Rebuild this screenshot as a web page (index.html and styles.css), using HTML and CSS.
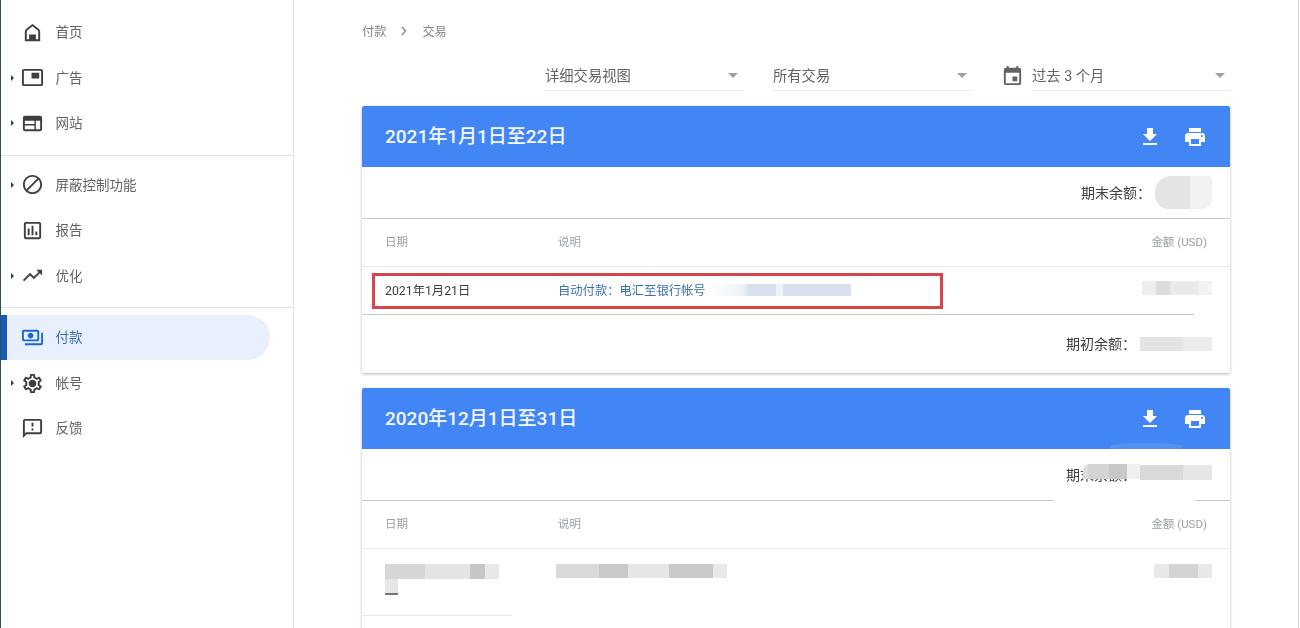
FILE: index.html
```html
<!DOCTYPE html>
<html lang="zh-CN">
<head>
<meta charset="utf-8">
<title>交易</title>
<link rel="stylesheet" href="styles.css">
</head>
<body>
<div class="page">
  <nav class="sidebar">
    <div class="nav-group first">
      <a class="nav-item"><span class="caret none"></span><svg class="nav-icon" viewBox="0 0 24 24"><path fill-rule="evenodd" d="M12 3L5.500 8Q4 9.200 4 11V21H20V11Q20 9.200 18.500 8ZM12 5.500L17.200 9.600Q18 10.200 18 11V19H15.500V14H8.500V19H6V11Q6 10.200 6.800 9.600Z"/></svg><span class="label">首页</span></a>
      <a class="nav-item"><span class="caret"></span><svg class="nav-icon" viewBox="0 0 24 24"><path d="M19 7h-8v6h8V7zm2-4H3c-1.100 0-2 .9-2 2v14c0 1.100.9 1.980 2 1.980h18c1.100 0 2-.88 2-1.980V5c0-1.100-.9-2-2-2zm0 16.010H3V4.980h18v14.030z"/></svg><span class="label">广告</span></a>
      <a class="nav-item"><span class="caret"></span><svg class="nav-icon" viewBox="0 0 24 24"><path d="M20 4H4c-1.100 0-2 .9-2 2v12c0 1.100.9 2 2 2h16c1.100 0 2-.9 2-2V6c0-1.100-.9-2-2-2zm-6 14H4v-4h10v4zm0-5.500H4V9h10v3.500zm6 5.500h-4.500V9H20v9z"/></svg><span class="label">网站</span></a>
    </div>
    <div class="nav-group second">
      <a class="nav-item"><span class="caret"></span><svg class="nav-icon" viewBox="0 0 24 24"><path d="M12 2C6.480 2 2 6.480 2 12s4.480 10 10 10 10-4.480 10-10S17.520 2 12 2zM4 12c0-4.420 3.580-8 8-8 1.850 0 3.550.63 4.900 1.690L5.690 16.900C4.630 15.550 4 13.850 4 12zm8 8c-1.850 0-3.550-.63-4.900-1.690L18.310 7.100C19.370 8.450 20 10.150 20 12c0 4.420-3.580 8-8 8z"/></svg><span class="label">屏蔽控制功能</span></a>
      <a class="nav-item"><span class="caret none"></span><svg class="nav-icon" viewBox="0 0 24 24"><path d="M19 3H5c-1.100 0-2 .9-2 2v14c0 1.100.9 2 2 2h14c1.100 0 2-.9 2-2V5c0-1.100-.9-2-2-2zm0 16H5V5h14v14zM7 10h2v7H7zm4-3h2v10h-2zm4 6h2v4h-2z"/></svg><span class="label">报告</span></a>
      <a class="nav-item"><span class="caret"></span><svg class="nav-icon" viewBox="0 0 24 24"><path d="M16 6l2.290 2.290-4.880 4.880-4-4L2 16.590 3.410 18l6-6 4 4 6.300-6.290L22 12V6z"/></svg><span class="label">优化</span></a>
    </div>
    <div class="nav-group last">
      <a class="nav-item active"><span class="caret none"></span><svg class="nav-icon" viewBox="0 0 24 24"><path d="M19 14V6c0-1.100-.9-2-2-2H3c-1.100 0-2 .9-2 2v8c0 1.100.9 2 2 2h14c1.100 0 2-.9 2-2zm-2 0H3V6h14v8zm-7-7c-1.660 0-3 1.340-3 3s1.340 3 3 3 3-1.340 3-3-1.340-3-3-3zm13 0v11c0 1.100-.9 2-2 2H4v-2h17V7h2z"/></svg><span class="label">付款</span></a>
      <a class="nav-item"><span class="caret"></span><svg class="nav-icon" viewBox="0 0 24 24"><path d="M19.430 12.980c.04-.32.07-.64.07-.98 0-.34-.03-.66-.07-.98l2.110-1.650c.19-.15.24-.42.12-.64l-2-3.460c-.09-.16-.26-.25-.44-.25-.06 0-.12.01-.17.03l-2.490 1c-.52-.4-1.080-.73-1.690-.98l-.38-2.650C14.460 2.180 14.250 2 14 2h-4c-.25 0-.46.18-.49.42l-.38 2.650c-.61.25-1.170.59-1.690.98l-2.490-1c-.06-.02-.12-.03-.18-.03-.17 0-.34.09-.43.25l-2 3.460c-.13.22-.07.49.12.64l2.110 1.650c-.04.32-.07.65-.07.98 0 .33.03.66.07.98l-2.110 1.650c-.19.15-.24.42-.12.64l2 3.460c.09.16.26.25.44.25.06 0 .12-.01.17-.03l2.490-1c.52.4 1.080.73 1.690.98l.38 2.650c.03.24.24.42.49.42h4c.25 0 .46-.18.49-.42l.38-2.650c.61-.25 1.170-.59 1.690-.98l2.490 1c.06.02.12.03.18.03.17 0 .34-.09.43-.25l2-3.460c.12-.22.07-.49-.12-.64l-2.110-1.650zm-1.980-1.710c.04.31.05.52.05.73 0 .21-.02.43-.05.73l-.14 1.130.89.7 1.080.84-.7 1.210-1.270-.51-1.040-.42-.9.68c-.43.32-.84.56-1.250.73l-1.060.43-.16 1.130-.2 1.350h-1.400l-.19-1.350-.16-1.130-1.060-.43c-.43-.18-.83-.41-1.230-.71l-.91-.7-1.060.43-1.270.51-.7-1.210 1.080-.84.89-.7-.14-1.130c-.03-.31-.05-.54-.05-.74s.02-.43.05-.73l.14-1.130-.89-.7-1.080-.84.7-1.210 1.270.51 1.040.42.9-.68c.43-.32.84-.56 1.250-.73l1.060-.43.16-1.130.2-1.350h1.390l.19 1.350.16 1.130 1.060.43c.43.18.83.41 1.230.71l.91.7 1.060-.43 1.270-.51.7 1.210-1.070.85-.89.7.14 1.130zM12 8c-2.210 0-4 1.790-4 4s1.790 4 4 4 4-1.790 4-4-1.790-4-4-4z"/></svg><span class="label">帐号</span></a>
      <a class="nav-item"><span class="caret none"></span><svg class="nav-icon" viewBox="0 0 24 24"><path d="M20 2H4c-1.100 0-1.990.9-1.990 2L2 22l4-4h14c1.100 0 2-.9 2-2V4c0-1.100-.9-2-2-2zm0 14H5.170L4 17.170V4h16v12zm-9-4h2v2h-2zm0-6h2v4h-2z"/></svg><span class="label">反馈</span></a>
    </div>
  </nav>

  <main class="main">
    <div class="crumbs"><span>付款</span><svg class="crumb-sep" viewBox="0 0 8 10"><path d="M2 1l3.500 4L2 9" fill="none" stroke="#80868b" stroke-width="1.300"/></svg><span>交易</span></div>

    <div class="filters">
      <div class="select s1"><span>详细交易视图</span><i class="tri"></i></div>
      <div class="select s2"><span>所有交易</span><i class="tri"></i></div>
      <svg class="cal" viewBox="0 0 24 24"><path d="M19 4h-1V2h-2v2H8V2H6v2H5c-1.110 0-2 .9-2 2v14c0 1.100.89 2 2 2h14c1.100 0 2-.9 2-2V6c0-1.100-.9-2-2-2zm0 16H5V9h14v11zm-2-7h-5v5h5v-5z"/></svg>
      <div class="select s3"><span>过去 3 个月</span><i class="tri"></i></div>
    </div>

    <section class="card">
      <header class="card-head">
        <h2>2021年1月1日至22日</h2>
        <svg class="head-icon" viewBox="0 0 24 24"><path d="M19 9h-4V3H9v6H5l7 7 7-7zM5 18v2h14v-2H5z"/></svg>
        <svg class="head-icon" viewBox="0 0 24 24"><path d="M19 8H5c-1.660 0-3 1.340-3 3v6h4v4h12v-4h4v-6c0-1.660-1.340-3-3-3zm-3 11H8v-5h8v5zm3-7c-.55 0-1-.45-1-1s.45-1 1-1 1 .45 1 1-.45 1-1 1zm-1-9H6v4h12V3z"/></svg>
      </header>
      <div class="balance strong-line"><span class="bal-text">期末余额&#xFF1A;</span><b class="blob"></b></div>
      <div class="thead"><span>日期</span><span>说明</span><span>金额 (USD)</span></div>
      <div class="trow strong-line">
        <span class="date">2021年1月21日</span>
        <span class="desc"><a>自动付款&#xFF1A;电汇至银行帐号</a><b class="blue-mosaic"></b></span>
        <b class="mosaic amt-1"></b>
        <i class="smear smear-a"></i>
        <i class="redbox"></i>
      </div>
      <div class="balance closing"><span class="bal-text">期初余额&#xFF1A;</span><b class="mosaic amt-2"></b></div>
    </section>

    <section class="card">
      <header class="card-head">
        <h2>2020年12月1日至31日</h2>
        <svg class="head-icon" viewBox="0 0 24 24"><path d="M19 9h-4V3H9v6H5l7 7 7-7zM5 18v2h14v-2H5z"/></svg>
        <svg class="head-icon" viewBox="0 0 24 24"><path d="M19 8H5c-1.660 0-3 1.340-3 3v6h4v4h12v-4h4v-6c0-1.660-1.340-3-3-3zm-3 11H8v-5h8v5zm3-7c-.55 0-1-.45-1-1s.45-1 1-1 1 .45 1 1-.45 1-1 1zm-1-9H6v4h12V3z"/></svg>
        <i class="bump"></i>
      </header>
      <div class="balance strong-line"><span class="bal-text">期末余额&#xFF1A;</span><b class="mosaic amt-3"></b><i class="over-text"></i><i class="smear smear-b"></i></div>
      <div class="thead"><span>日期</span><span>说明</span><span>金额 (USD)</span></div>
      <div class="trow tall-row">
        <span class="date"><b class="mosaic date-blur"></b><b class="mosaic date-tail"></b></span>
        <span class="desc"><b class="mosaic desc-blur"></b></span>
        <b class="mosaic amt-4"></b>
        <i class="smear smear-c"></i>
      </div>
      <div class="next-row"></div>
    </section>
  </main>
</div>
</body>
</html>
```
FILE: styles.css
```css
* { box-sizing: border-box; }
html, body { margin: 0; height: 100%; overflow: hidden; background: #fff; }
body { font-family: Roboto, "Noto Sans CJK SC", sans-serif; color: #5f6368; }
b, i { display: block; font-weight: 400; font-style: normal; }

.page { display: grid; grid-template-columns: 293px 1fr; height: 628px; border-left: 1px solid #2f4f55; filter: blur(.35px); }

.sidebar { border-right: 1px solid #e0e0e0; height: 628px; }
.nav-group { padding: 7px 0 8px; border-bottom: 1px solid #e0e0e0; }
.nav-group.first { padding: 9.500px 0 8.500px; }
.nav-group.second { padding: 6px 0 8.200px; }
.nav-group.last { border-bottom: 0; }
.nav-item { display: flex; align-items: center; height: 45.600px; width: 269px; font-size: 13.500px; color: #5f6368; padding-left: 10px; }
.label { margin-bottom: 2px; }
.last .label { margin-bottom: 3px; }
.caret { width: 0; height: 0; border-left: 3.500px solid #3c4043; border-top: 3.500px solid transparent; border-bottom: 3.500px solid transparent; margin-right: 7px; flex: none; }
.caret.none { border-left-color: transparent; }
.nav-icon { width: 23px; height: 23px; fill: #3c4043; margin-right: 11.500px; flex: none; }
.nav-item.active { background: #e8f0fe; border-left: 6px solid #185abc; border-radius: 0 23px 23px 0; padding-left: 4px; color: #3f6fae; }
.nav-item.active .nav-icon { fill: #1967d2; }

.main { padding: 0 68px; margin-right: 1px; border-right: 1px solid #cfcfcf; min-width: 0; overflow: hidden; height: 628px; }
.crumbs { display: flex; align-items: center; height: 62px; padding-bottom: 1px; font-size: 12.200px; color: #80868b; }
.crumb-sep { width: 8px; height: 10px; margin: 0 14px; }

.filters { display: flex; align-items: flex-start; height: 44px; justify-content: flex-end; }
.select { display: flex; align-items: center; justify-content: space-between; width: 198px; height: 29px; padding: 0 5px 4px 0; border-bottom: 1px solid #e8eaed; font-size: 14.300px; color: #5f6368; }
.s2 { margin-left: 30px; width: 199px; }
.cal { width: 23px; height: 23px; fill: #5f6368; margin: 2px 8px 0 29px; flex: none; }
.tri { width: 0; height: 0; border-left: 5px solid transparent; border-right: 5px solid transparent; border-top: 5px solid #9aa0a6; margin-top: 3px; }

.card { position: relative; background: #fff; border-radius: 2px; box-shadow: 0 1px 3px rgba(60,64,67,.4); margin: 0 0 15px; overflow: hidden; }
.card-head { position: relative; display: flex; align-items: center; height: 61px; background: #4285f4; color: #fff; padding: 0 13px 0 23px; }
.card-head h2 { margin: 0 auto 0 0; padding-bottom: 4px; font-size: 19px; font-weight: 500; color: #f4f8ff; }
.head-icon { width: 24px; height: 24px; fill: #fff; margin-left: 21px; position: relative; left: -10px; }
.bump { position: absolute; right: 48px; bottom: 0; width: 72px; height: 6px; border-radius: 50% 50% 0 0; background: #5391f5; }

.balance { position: relative; display: flex; align-items: center; justify-content: flex-end; height: 52px; padding-right: 18px; font-size: 14px; color: #3c4043; border-bottom: 1px solid #e8eaed; }
.bal-text { margin-bottom: 2px; }
.strong-line { border-bottom-color: #c9c9c9; }
.closing { height: 58px; border-bottom: 0; }
.thead, .trow { position: relative; display: grid; grid-template-columns: 173px 1fr auto; align-items: center; padding: 0 23px; }
.thead { height: 48px; padding-bottom: 3px; font-size: 11.500px; color: #9aa0a6; border-bottom: 1px solid #e8eaed; }
.trow { height: 48px; padding-bottom: 2px; font-size: 12.300px; color: #3c4043; border-bottom: 1px solid #c9c9c9; }
.tall-row { height: 67px; border-bottom-color: #e8eaed; align-items: start; padding-top: 15px; padding-bottom: 0; }
.next-row { height: 40px; }
.desc { display: flex; align-items: center; }
.desc a { color: #3a72b8; font-size: 12.300px; }

.blob { width: 57px; height: 33px; margin-left: 4px; border-radius: 16px 4px 10px 14px; background: linear-gradient(90deg, #e4e4e4 0 62%, #f1f1f1 62%); }
.blue-mosaic { width: 145px; height: 12px; background: linear-gradient(90deg, #fff 0, #eef2f8 25%, #d6e0ee 30% 48%, #eef2f8 48% 53%, #d6e0ee 53%); }
.mosaic { background: #e6e6e6; }
.amt-1 { width: 70px; height: 14px; margin: -4px -5px 0 0; background: linear-gradient(90deg, #eee 0 20%, #ddd 20% 40%, #eaeaea 40% 80%, #f3f3f3 80%); }
.amt-2 { width: 72px; height: 14px; margin-left: 4px; background: linear-gradient(90deg, #e4e4e4 0 60%, #ececec 60%); }
.amt-3 { width: 72px; height: 15px; margin-left: 4px; margin-top: -5px; background: linear-gradient(90deg, #d9d9d9 0 60%, #e6e6e6 60%); }
.over-text { position: absolute; right: 90px; top: 15px; width: 57px; height: 15px; background: linear-gradient(90deg, #ddd 0 8%, #d4d4d4 8% 46%, #c8c8c8 46% 77%, #f0f0f0 77%); border-radius: 6px 0 0 0; }
.amt-4 { width: 58px; height: 14px; margin-right: -5px; background: linear-gradient(90deg, #e8e8e8 0 25%, #d4d4d4 25% 75%, #e8e8e8 75%); }
.date-blur { width: 114px; height: 15px; background: linear-gradient(90deg, #d6d6d6 0 35%, #e4e4e4 35% 75%, #c6c6c6 75% 88%, #e8e8e8 88%); }
.date-tail { width: 13px; height: 16px; background: #e6e6e6; border-bottom: 2px solid #777; }
.desc-blur { width: 171px; height: 14px; margin-left: -2px; background: linear-gradient(90deg, #dadada 0 25%, #c9c9c9 25% 42%, #e6e6e6 42% 66%, #c9c9c9 66% 92%, #e8e8e8 92%); }

.smear { position: absolute; background: #fff; }
.smear-a { right: 0; bottom: -1px; width: 36px; height: 8px; }
.smear-b { right: 33px; bottom: -2px; width: 145px; height: 14px; border-radius: 6px; }
.smear-c { left: 150px; right: 0; bottom: -2px; height: 6px; }
.redbox { position: absolute; left: 10px; top: 6px; width: 571px; height: 36px; border: 3px solid #d8444b; }
```
